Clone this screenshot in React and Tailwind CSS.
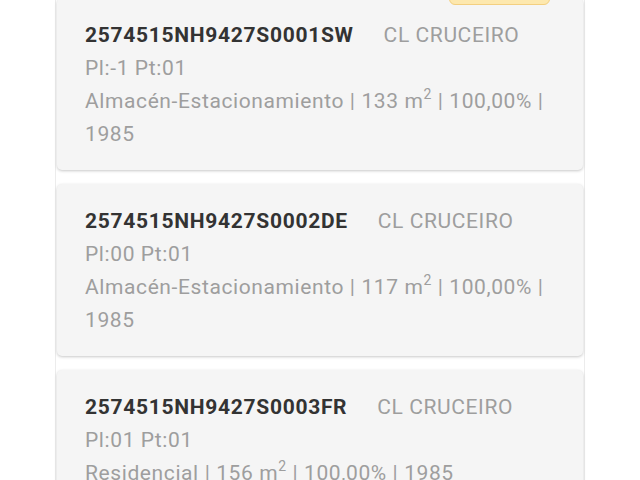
const items = [
    { ref: "2574515NH9427S0001SW", loc: "Pl:-1 Pt:01", use: "Almacén-Estacionamiento", area: "133", tail: "100,00% | 1985", badge: true },
    { ref: "2574515NH9427S0002DE", loc: "Pl:00 Pt:01", use: "Almacén-Estacionamiento", area: "117", tail: "100,00% | 1985" },
    { ref: "2574515NH9427S0003FR", loc: "Pl:01 Pt:01", use: "Residencial", area: "156", tail: "100,00% | 1985" },
];

const Card = ({ item }) => {
    return (
        <div className="relative bg-[#f5f5f5] rounded-[5px] shadow-[0_1px_3px_rgba(0,0,0,0.22)] pl-[28px] pr-[30px] pt-[21px] pb-[19px] text-[21px] leading-[33px] tracking-[0.6px]">
            {item.badge && (
                <div className="absolute right-[33px] -top-[24px] w-[101px] h-[31px] bg-[#fde8ae] border border-[#f3cf80] rounded-[6px]" />
            )}
            <div className="flex items-center gap-[30px]">
                <span className="font-bold text-[#333333] tracking-[0.7px]">{item.ref}</span>
                <span className="text-[#9e9e9e]">CL CRUCEIRO</span>
            </div>
            <div className="text-[#9e9e9e]">{item.loc}</div>
            <div className="text-[#9e9e9e]">
                {item.use} | {item.area} m<sup className="text-[14px] leading-none relative -top-[9px]">2</sup> | {item.tail}
            </div>
        </div>
    );
};

const App = () => {
    return (
        <div className="w-[640px] h-[480px] overflow-hidden bg-white font-['Roboto',sans-serif]">
            <div className="mx-auto w-[530px] -mt-[2px] border-x border-[#ececec] flex flex-col gap-[14px] px-[1px]">
                {items.map((item) => (
                    <Card key={item.ref} item={item} />
                ))}
            </div>
        </div>
    );
};

export default App;
